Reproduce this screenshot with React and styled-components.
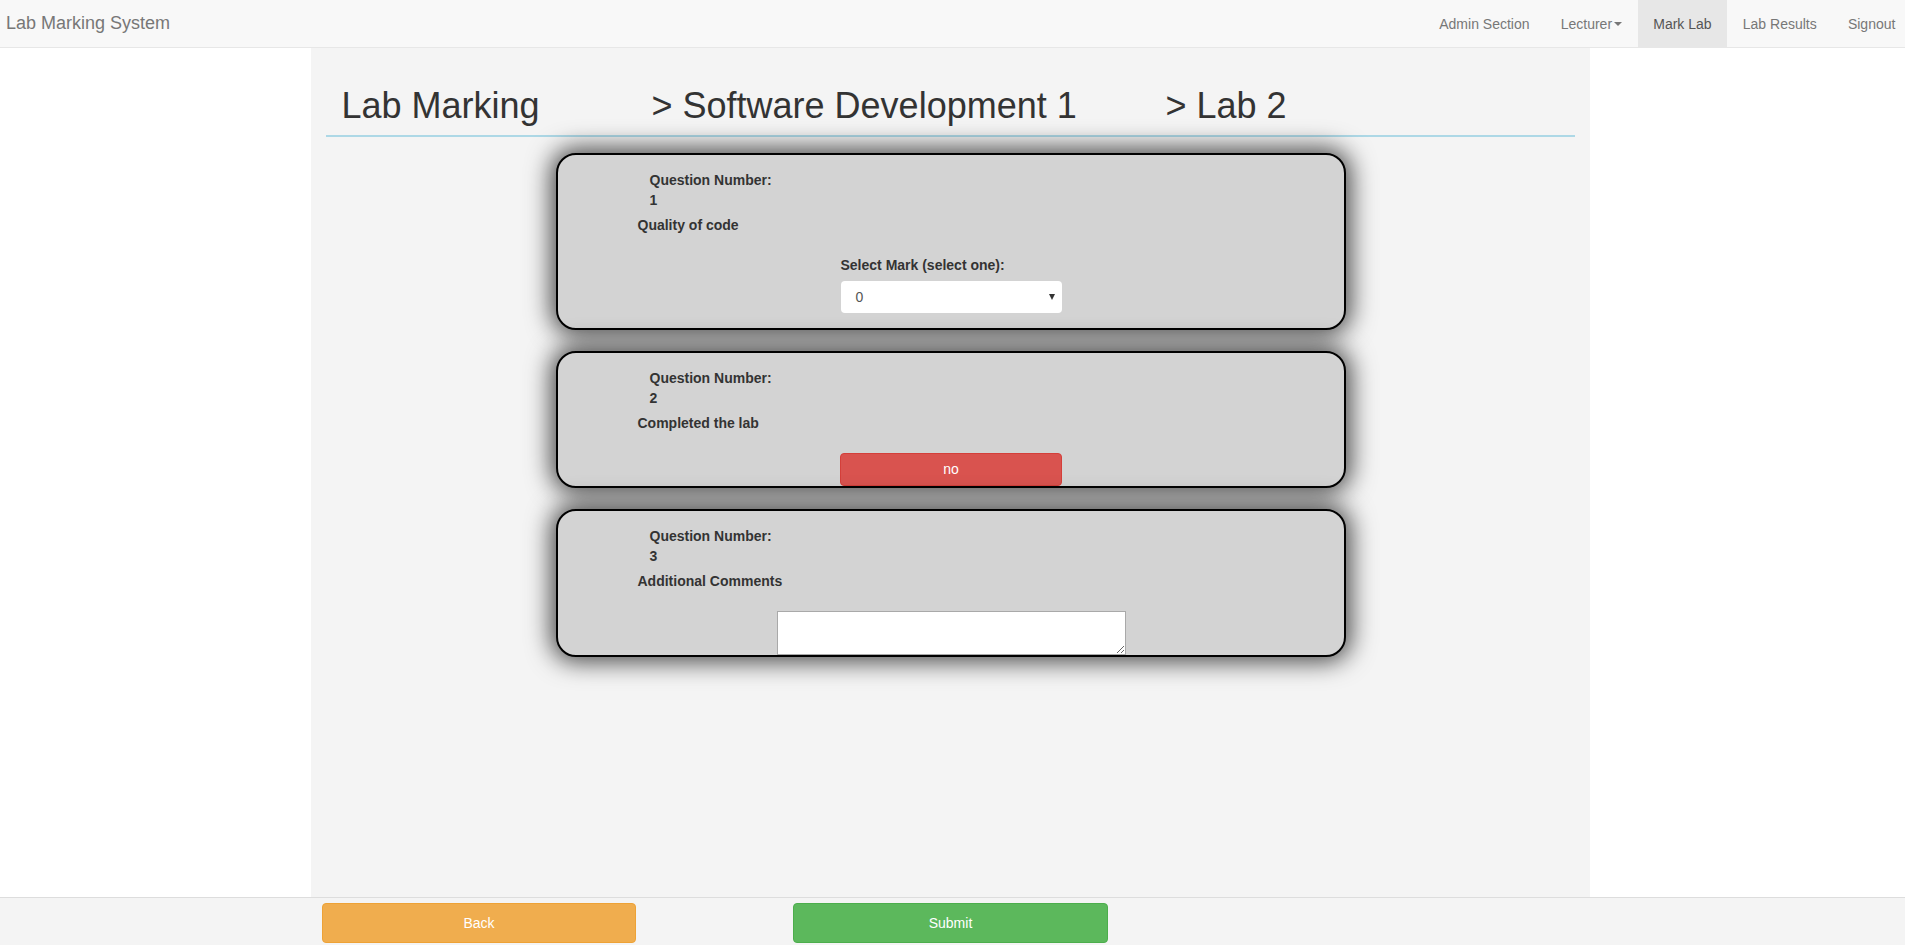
import React from "react";
import styled, { createGlobalStyle } from "styled-components";

const GlobalStyle = createGlobalStyle`
  html, body {
    margin: 0;
    padding: 0;
    background: #fff;
    font-family: "Liberation Sans", Arial, sans-serif;
    font-size: 14px;
    color: #333;
  }
  * { box-sizing: border-box; }
`;

const Page = styled.div`
  height: 100vh;
  display: flex;
  flex-direction: column;
  overflow: hidden;
`;

const Navbar = styled.nav`
  height: 48px;
  flex: none;
  display: flex;
  align-items: stretch;
  justify-content: space-between;
  background: #f8f8f8;
  border-bottom: 1px solid #e7e7e7;
  overflow: hidden;
`;

const Brand = styled.a`
  display: flex;
  align-items: center;
  padding: 0 6px;
  font-size: 18px;
  color: #777;
  text-decoration: none;
`;

const NavList = styled.ul`
  display: flex;
  margin: 0 -6px 0 0;
  padding: 0;
  list-style: none;
`;

const NavItem = styled.li`
  display: flex;
  align-items: center;
  padding: 0 15.6px;
  color: ${(p) => (p.$active ? "#555" : "#777")};
  background: ${(p) => (p.$active ? "#e7e7e7" : "transparent")};
  font-size: 14px;
`;

const Caret = styled.span`
  display: inline-block;
  width: 0;
  height: 0;
  margin-left: 2px;
  border-top: 4px solid #777;
  border-left: 4px solid transparent;
  border-right: 4px solid transparent;
`;

const Body = styled.div`
  flex: 1;
  display: flex;
  justify-content: center;
  min-height: 0;
`;

const Column = styled.main`
  width: 1279px;
  margin-left: -4px;
  background: #f4f4f4;
  padding: 0 15px;
`;

const HeaderRow = styled.div`
  display: grid;
  grid-template-columns: 310px 514px auto;
  margin-top: 38px;
  padding: 0 0 9.4px 15.5px;
  border-bottom: 2px solid #add8e6;
`;

const HeaderPart = styled.h1`
  margin: 0;
  font-size: 36px;
  font-weight: 500;
  line-height: 1.1;
  color: #333;
`;

const Cards = styled.div`
  display: flex;
  flex-direction: column;
  align-items: center;
  gap: 21px;
  margin-top: 16px;
`;

const Card = styled.section`
  width: 790px;
  background: #d3d3d3;
  border: 2px solid #000;
  border-radius: 20px;
  box-shadow: 0 0 24px 5px rgba(0, 0, 0, 0.7);
  padding-top: 15px;
  display: flex;
  flex-direction: column;
  overflow: hidden;
`;

const Label = styled.div`
  font-weight: 700;
  line-height: 20px;
  margin-left: ${(p) => p.$indent}px;
`;

const Question = styled(Label)`
  margin-bottom: 20px;
  margin-top: 5px;
`;

const Field = styled.div`
  align-self: center;
  width: 221px;
  margin-left: 1px;
  margin-bottom: 15px;
  display: flex;
  flex-direction: column;
  gap: 6px;
`;

const SelectBox = styled.div`
  position: relative;
  height: 32px;
  background: #fff;
  border-radius: 4px;
  display: flex;
  align-items: center;
  padding: 0 15px;
  color: #555;
  font-size: 14px;
`;

const SelectArrow = styled.span`
  position: absolute;
  right: 7px;
  top: 13px;
  width: 0;
  height: 0;
  border-top: 6px solid #333;
  border-left: 3.5px solid transparent;
  border-right: 3.5px solid transparent;
`;

const Button = styled.button`
  height: ${(p) => p.$h}px;
  width: ${(p) => p.$w}px;
  border-radius: 4px;
  border: 1px solid ${(p) => p.$border};
  background: ${(p) => p.$bg};
  color: #fff;
  font-family: "Liberation Sans", Arial, sans-serif;
  font-size: 14px;
  cursor: pointer;
`;

const CardButton = styled(Button)`
  align-self: center;
  margin-left: 1px;
`;

const Comments = styled.textarea`
  align-self: center;
  width: 349px;
  height: 44px;
  margin: 0 0 0 1px;
  border: 1px solid #a9a9a9;
  background: #fff;
  display: block;
  font-family: "Liberation Sans", Arial, sans-serif;
`;

const Footer = styled.footer`
  height: 48px;
  flex: none;
  background: #f4f4f4;
  border-top: 1px solid #ddd;
  display: flex;
  justify-content: center;
`;

const FooterInner = styled.div`
  width: 1279px;
  margin-left: -4px;
  padding: 5px 0 0 11px;
  display: flex;
  gap: 157px;
  align-items: flex-start;
`;

const questions = [
  { n: 1, title: "Quality of code", kind: "select" },
  { n: 2, title: "Completed the lab", kind: "toggle" },
  { n: 3, title: "Additional Comments", kind: "text" },
];

function QuestionCard({ q }) {
  return (
    <Card>
      <Label $indent={92}>Question Number:</Label>
      <Label $indent={92}>{q.n}</Label>
      <Question $indent={80}>{q.title}</Question>
      {q.kind === "select" && (
        <Field>
          <Label $indent={0}>Select Mark (select one):</Label>
          <SelectBox>
            0
            <SelectArrow />
          </SelectBox>
        </Field>
      )}
      {q.kind === "toggle" && (
        <CardButton $w={222} $h={33} $bg="#d9534f" $border="#d43f3a">
          no
        </CardButton>
      )}
      {q.kind === "text" && <Comments />}
    </Card>
  );
}

export default function App() {
  return (
    <Page>
      <GlobalStyle />
      <Navbar>
        <Brand>Lab Marking System</Brand>
        <NavList>
          <NavItem>Admin Section</NavItem>
          <NavItem>
            Lecturer
            <Caret />
          </NavItem>
          <NavItem $active>Mark Lab</NavItem>
          <NavItem>Lab Results</NavItem>
          <NavItem>Signout</NavItem>
        </NavList>
      </Navbar>
      <Body>
        <Column>
          <HeaderRow>
            <HeaderPart>Lab Marking</HeaderPart>
            <HeaderPart>&gt; Software Development 1</HeaderPart>
            <HeaderPart>&gt; Lab 2</HeaderPart>
          </HeaderRow>
          <Cards>
            {questions.map((q) => (
              <QuestionCard key={q.n} q={q} />
            ))}
          </Cards>
        </Column>
      </Body>
      <Footer>
        <FooterInner>
          <Button $w={314} $h={40} $bg="#f0ad4e" $border="#eea236">
            Back
          </Button>
          <Button $w={315} $h={40} $bg="#5cb85c" $border="#4cae4c">
            Submit
          </Button>
        </FooterInner>
      </Footer>
    </Page>
  );
}
